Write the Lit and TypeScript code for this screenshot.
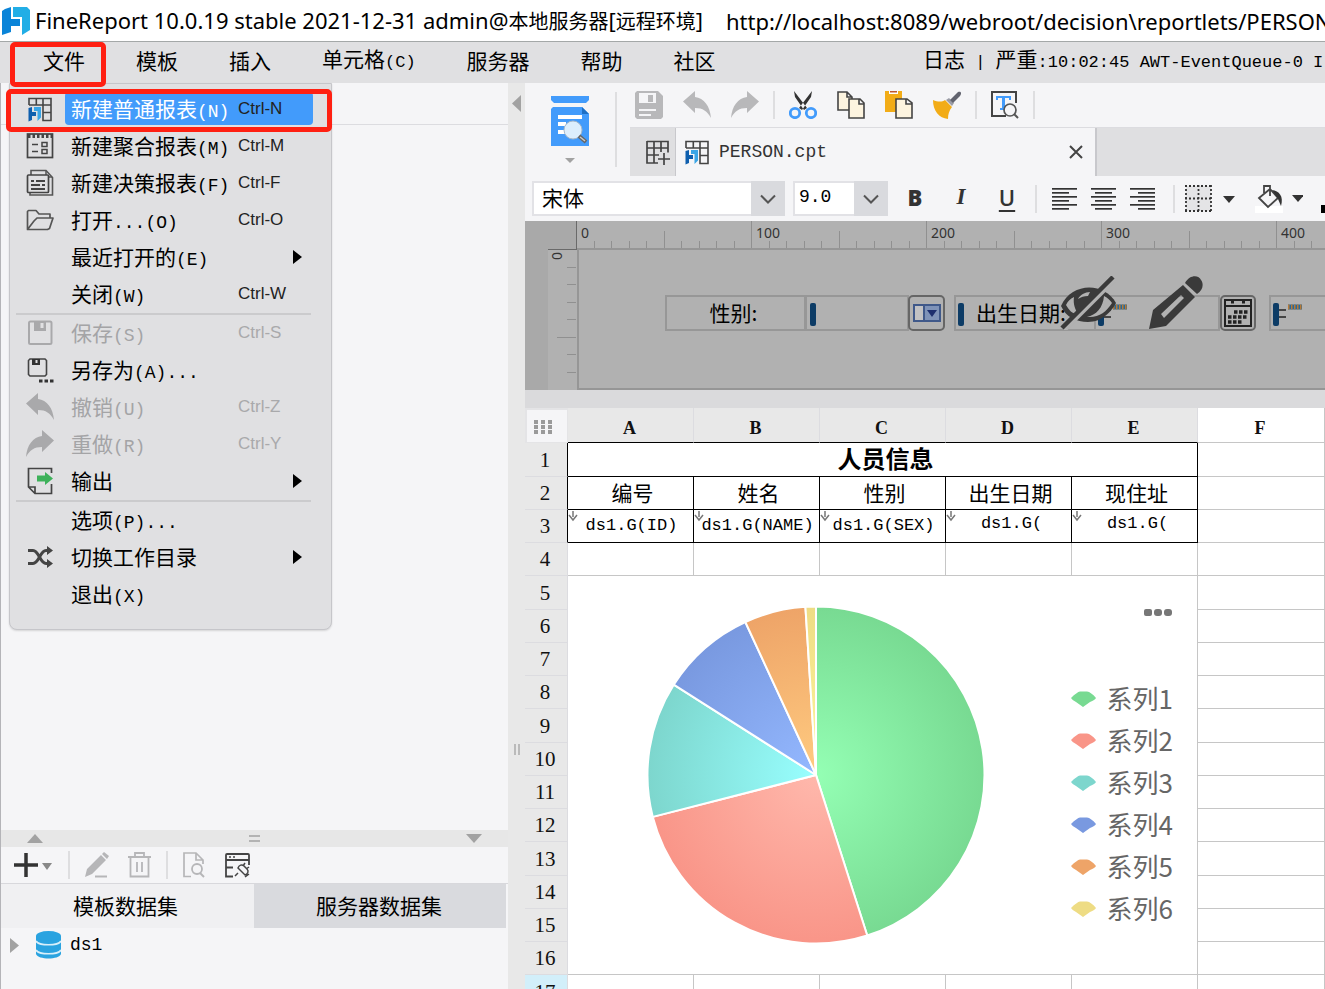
import { LitElement, html, svg, css, nothing, TemplateResult } from "lit";
import { customElement } from "lit/decorators.js";
import { classMap } from "lit/directives/class-map.js";

type Entry = {
  label: string;
  keys?: string;
  icon?: TemplateResult;
  disabled?: boolean;
  active?: boolean;
  sub?: boolean;
};

/** Wraps the Latin runs of a label so that they use the Latin face. */
const mixed = (text: string) =>
  html`<span class="mix">${text
    .split(/([\x20-\x7e]+)/)
    .filter(Boolean)
    .map((run) => (/^[\x20-\x7e]/.test(run) ? html`<span class="mono">${run}</span>` : run))}</span>`;

const box = (size: number, body: TemplateResult, view = 28) =>
  html`<svg width=${size} height=${size} viewBox="0 0 ${view} ${view}" fill="none" aria-hidden="true">${body}</svg>`;

const gridLogo = box(26, svg`
  <path d="M2 9V2.500h22V24.500h-8V9M2 9h22M9.300 2v7M16 2v7M16 16.500h8" stroke="#444" stroke-width="1.600"/>
  <path d="M1.500 12l3.500-1v5h4v4H5v4l-3.500 1.500z" fill="#0f5fae"/>
  <path d="M7 11h7v10.500L10.500 25v-10H7z" fill="#3aa5e6"/>`, 26);
const gridPlus = box(26, svg`
  <path d="M3 2.500h21v11M3 2v22h11M3 9h21M10 2v22M17 2v11M3 16h12" stroke="#444" stroke-width="1.700"/>
  <path d="M20 14v12M14 20h12" stroke="#444" stroke-width="1.700"/>`, 26);
const aggregate = box(28, svg`
  <rect x="1.500" y="2" width="25" height="23.500" stroke="#444" stroke-width="1.700"/>
  <path d="M2 4h24" stroke="#444" stroke-width="4" stroke-dasharray="2.500 2"/>
  <path d="M6 12.500h6M6 19.500h6" stroke="#444" stroke-width="1.500"/>
  <rect x="16" y="10.500" width="5" height="4" stroke="#444" stroke-width="1.500"/>
  <rect x="16" y="17.500" width="5" height="4" stroke="#444" stroke-width="1.500"/>`);
const decision = box(28, svg`
  <path d="M5 6V1.500h15l6.500 7V26H4v-3" stroke="#555" stroke-width="1.600"/>
  <path d="M20 2v6h6" stroke="#555" stroke-width="1.500"/>
  <rect x="1.500" y="6" width="21" height="17.500" rx="1" fill="#e0e0e2" stroke="#444" stroke-width="1.700"/>
  <path d="M5 12h3M10 12h9M5 16h9M5 20h14M16 16h3" stroke="#444" stroke-width="2"/>`);
const folder = box(28, svg`
  <path d="M1.500 23.500V5.500l1-1H10l3 3.500h11v4M1.500 23.500L8 15l3-3h16l-3.500 10.500-2 1z" stroke="#555" stroke-width="1.700" stroke-linejoin="round"/>`);
const saveGray = box(28, svg`
  <rect x="3" y="2.500" width="22.500" height="22.500" rx="1.500" stroke="#a9a9ab" stroke-width="2"/>
  <path d="M8 3h12v9H8z" fill="#a9a9ab"/><path d="M14.500 4h3v5h-3z" fill="#e0e0e2"/>`);
const saveAs = box(28, svg`
  <path d="M11 20H4l-1.500-1.500v-14L4 3h15l1.500 1.500v14L19 20h-9" stroke="#444" stroke-width="1.600"/>
  <path d="M6 3h8v6H6z" fill="#333"/><path d="M9.500 4h2v3h-2z" fill="#e0e0e2"/>
  <path d="M13 25h3.500M18.500 25H22M24 25h3.500" stroke="#333" stroke-width="3"/>`);
const undo = (c: string) => box(28, svg`
  <path d="M0 10.500L12 0v6c9 1 15 9 16 21-4-7-8-10-16-10v5z" fill=${c}/>`);
const redo = (c: string) => box(28, svg`
  <path d="M28 10.500L16 0v6C7 7 1 15 0 27c4-7 8-10 16-10v5z" fill=${c}/>`);
const exportIcon = box(28, svg`
  <path d="M25.500 6V1.500h-23V20l6.500 6.500h16.500V17M3 20h6v6" stroke="#444" stroke-width="1.700"/>
  <path d="M11 8.500h8V5l8 6.500-8 6.500v-3.500h-8z" fill="#3db15a"/>`);
const shuffle = box(28, svg`
  <path d="M2 7.500h5c6 0 7 13 13 13h3M2 20.500h5c6 0 7-13 13-13h3" stroke="#444" stroke-width="3"/>
  <path d="M21 3l6 4.500-6 4.500zM21 16l6 4.500-6 4.500z" fill="#444"/>`);

const MENU: Entry[][] = [
  [
    { label: "新建普通报表(N)", keys: "Ctrl-N", icon: gridLogo, active: true },
    { label: "新建聚合报表(M)", keys: "Ctrl-M", icon: aggregate },
    { label: "新建决策报表(F)", keys: "Ctrl-F", icon: decision },
    { label: "打开...(O)", keys: "Ctrl-O", icon: folder },
    { label: "最近打开的(E)", sub: true },
    { label: "关闭(W)", keys: "Ctrl-W" },
  ],
  [
    { label: "保存(S)", keys: "Ctrl-S", icon: saveGray, disabled: true },
    { label: "另存为(A)...", icon: saveAs },
    { label: "撤销(U)", keys: "Ctrl-Z", icon: undo("#a9a9ab"), disabled: true },
    { label: "重做(R)", keys: "Ctrl-Y", icon: redo("#a9a9ab"), disabled: true },
    { label: "输出", icon: exportIcon, sub: true },
  ],
  [{ label: "选项(P)..." }, { label: "切换工作目录", icon: shuffle, sub: true }, { label: "退出(X)" }],
];

const SERIES = [
  { name: "系列1", to: 162.3, inner: "#94ffb4", outer: "#78da92" },
  { name: "系列2", to: 255.6, inner: "#ffb8ac", outer: "#f99588" },
  { name: "系列3", to: 302.4, inner: "#98ffff", outer: "#7dd6cd" },
  { name: "系列4", to: 335.2, inner: "#94b8ff", outer: "#7999e0" },
  { name: "系列5", to: 356.4, inner: "#ffcb80", outer: "#eea468" },
  { name: "系列6", to: 360, inner: "#fff69c", outer: "#eedc84" },
];

@customElement("fr-menu")
export class FrMenu extends LitElement {
  static styles = css`
    :host { display: block; }
    .menu {
      box-sizing: border-box; width: 323px; padding: 6px 0 17px;
      background: #e0e0e2; border: 1px solid #c6c6ca; border-radius: 0 0 8px 8px;
      box-shadow: 0 1px 2px #0002;
    }
    .item {
      display: grid; grid-template-columns: 28px 168px 1fr 36px; align-items: center;
      width: 100%; height: 37px; padding: 0 0 0 16px; border: 0; background: none; text-align: left;
      font: 21px/32px "Noto Sans CJK SC", sans-serif; color: #000; white-space: nowrap;
    }
    .item:disabled { color: #a4a4a6; }
    .mono { font: 18px/28px "Liberation Mono", monospace; }
    .icon { display: flex; justify-content: center; }
    .body {
      grid-column: 2 / 4; display: grid; grid-template-columns: 167px 1fr; height: 33px; box-sizing: border-box;
      margin: 0 -18px 0 11px; padding: 0 0 3px 6px; border-radius: 4px; align-items: center;
    }
    .active .body { background: #429bfb; }
    .active .label { color: #fff; }
    .keys { font: 17px/32px "Liberation Sans", sans-serif; color: #222; }
    .item:disabled .keys { color: #a9a9ab; }
    .arrow { width: 9px; height: 16px; justify-self: end; margin-right: 29px; grid-column: 4; }
    .sep { height: 2px; border: 0; margin: 1px 20px -1px 6px; background: #cbcbcd; }
  `;
  render() {
    return html`<div class="menu" role="menu">
      ${MENU.map((group, i) => html`
        ${i ? html`<hr class="sep" />` : nothing}
        ${group.map((e) => html`<button role="menuitem" class=${classMap({ item: true, active: !!e.active })} ?disabled=${e.disabled}>
          <span class="icon">${e.icon ?? nothing}</span>
          <span class="body"><span class="label">${mixed(e.label)}</span><span class="keys">${e.keys ?? ""}</span></span>
          ${e.sub ? html`<svg class="arrow" viewBox="0 0 9 16"><path d="M0 1v14l9-7z" fill="#000"/></svg>` : nothing}
        </button>`)}`)}
    </div>`;
  }
}

@customElement("fr-chart")
export class FrChart extends LitElement {
  static styles = css`
    :host { display: flex; height: 100%; justify-content: space-between; padding: 0 24px 0 78px; box-sizing: border-box; }
    .pie { align-self: center; }
    .side { display: flex; flex-direction: column; align-items: flex-end; padding-top: 32px; }
    .more { border: 0; background: none; padding: 0; height: 10px; display: flex; }
    .legend { list-style: none; margin: 60px 0 0; padding: 0; }
    .entry { display: flex; align-items: center; gap: 11px; height: 42px; font: 26px/42px "Noto Sans CJK SC", sans-serif; color: #666; }
    .name { padding-bottom: 3px; }
  `;
  render() {
    const at = (deg: number) => {
      const a = (deg * Math.PI) / 180;
      return `${(170 + 168.5 * Math.sin(a)).toFixed(2)} ${(170 - 168.5 * Math.cos(a)).toFixed(2)}`;
    };
    return html`
      <svg class="pie" width="340" height="340" viewBox="0 0 340 340" role="img" aria-label="饼图">
        ${SERIES.map((s, i) => {
          const from = i ? SERIES[i - 1].to : 0;
          return svg`<radialGradient id="g${i}" gradientUnits="userSpaceOnUse" cx="170" cy="170" r="168.5">
              <stop offset="0" stop-color=${s.inner}/><stop offset="1" stop-color=${s.outer}/></radialGradient>
            <path d="M170 170L${at(from)}A168.5 168.5 0 0 1 ${at(s.to)}z" fill="url(#g${i})" stroke="#fff" stroke-width="2" stroke-linejoin="bevel"/>`;
        })}
      </svg>
      <div class="side">
        <button class="more" aria-label="更多"><svg width="30" height="10"><rect x="1" y="1" width="8" height="7" rx="2" fill="#777"/><rect x="11" y="1" width="8" height="7" rx="3" fill="#777"/><rect x="21" y="1" width="8" height="7" rx="3" fill="#777"/></svg></button>
        <ul class="legend">
          ${SERIES.map((s) => html`<li class="entry">
            <svg width="25" height="16" viewBox="0 0 25 16"><path d="M0 7Q6 1 9 .500h7Q20 1 25 7q-1 2-6 4l-7 5-7-5Q1 9 0 7z" fill=${s.outer}/></svg>
            <span class="name">${s.name}</span></li>`)}
        </ul>
      </div>`;
  }
}

@customElement("fr-sheet")
export class FrSheet extends LitElement {
  static styles = css`
    :host { display: block; }
    .sheet { width: 100%; table-layout: fixed; border-collapse: separate; border-spacing: 0; background: #fff; }
    .rows { width: 43px; }
    .col { width: 126px; }
    th, td { padding: 0; box-sizing: border-box; border: 0 solid #c6c6c6; border-width: 0 1px 1px 0; text-align: center; overflow: hidden; white-space: nowrap; }
    .head { height: 35px; }
    .row { height: 33px; }
    .row:nth-child(4n + 1) { height: 34px; }
    .letter, .num { font: 21px/28px "Liberation Serif", serif; color: #111; background: #e8e8e8; border-color: #dcdce0; }
    .num { padding-right: 2px; }
    .letter { font-weight: bold; font-size: 18px; border-bottom-color: #000; padding: 5px 2px 0 0; }
    .plain { background: #fff; border-color: #c6c6c6; }
    .corner { background: #f5f5f7; border: 2px solid #e4e4e6; border-width: 2px 1px 1px 2px; padding: 4px 9px 0 0; }
    .dots { display: block; margin: auto; }
    .hot { background: #d2effa; }
    .edge { border-right-color: #000; }
    .boxed, .title { font: 21px/28px "Noto Sans CJK SC", sans-serif; border-color: #000; padding: 0 0 3px 4px; }
    .title { font-weight: bold; font-size: 24px; padding-left: 6px; }
    .field { position: relative; padding: 0 0 0 2px; }
    .short { padding: 0 0 4px 6px; }
    .formula { display: block; font: 17px/28px "Liberation Mono", monospace; }
    .down { position: absolute; left: 0; top: 0; }
    .chart { vertical-align: top; height: 399px; }
  `;
  render() {
    const num = (n: number) => html`<th scope="row" class=${classMap({ num: true, edge: n < 4, hot: n === 17 })}>${n}</th>`;
    const blanks = (n: number) => Array.from({ length: n }, () => html`<td></td>`);
    return html`<table class="sheet">
      <colgroup><col class="rows" />${"ABCDE".split("").map(() => html`<col class="col" />`)}<col /></colgroup>
      <thead><tr class="head">
        <th class="corner"><svg class="dots" width="20" height="16">${[1, 8, 15].map((x) => [0, 5, 10].map((y) => svg`<rect x=${x} y=${y} width="4" height="4" fill="#9a9a9a"/>`))}</svg></th>
        ${"ABCDEF".split("").map((l) => html`<th scope="col" class=${classMap({ letter: true, plain: l === "F" })}>${l}</th>`)}
      </tr></thead>
      <tbody>
        <tr class="row">${num(1)}<td class="title" colspan="5">人员信息</td><td></td></tr>
        <tr class="row">${num(2)}${["编号", "姓名", "性别", "出生日期", "现住址"].map((t) => html`<td class="boxed">${t}</td>`)}<td></td></tr>
        <tr class="row">${num(3)}${["ds1.G(ID)", "ds1.G(NAME)", "ds1.G(SEX)", "ds1.G(", "ds1.G("].map((t) => html`<td class=${classMap({ boxed: true, field: true, short: t.endsWith("(") })}>
          <svg class="down" width="12" height="13"><path d="M5 1v6M1 5l4 5 4-5" stroke="#777" stroke-width="1.500" fill="none"/></svg><span class="formula">${t}</span></td>`)}<td></td></tr>
        <tr class="row">${num(4)}${blanks(6)}</tr>
        <tr class="row">${num(5)}<td class="chart" colspan="5" rowspan="12"><fr-chart></fr-chart></td><td></td></tr>
        ${Array.from({ length: 11 }, (_, i) => html`<tr class="row">${num(i + 6)}<td></td></tr>`)}
        <tr class="row">${num(17)}${blanks(6)}</tr>
      </tbody>
    </table>`;
  }
}

@customElement("fr-params")
export class FrParams extends LitElement {
  static styles = css`
    :host { display: block; }
    .pane { display: grid; grid-template-columns: 23px 29px 1fr; grid-template-rows: 29px 140px; background: #b1b1b1; overflow: hidden; }
    .strip { background: #a9a9a9; grid-row: 1 / 3; }
    .joint { background: #a9a9a9; border: solid #6a6a6a; border-width: 0 1px 1px 0; }
    .across { overflow: hidden; border-bottom: 2px solid #969696; }
    .tick { font: 14px "Noto Sans", sans-serif; fill: #333; }
    .canvas { position: relative; overflow: hidden; border: 2px solid #969696; border-width: 0 0 2px 2px; }
    .widget { position: absolute; top: 45px; height: 36px; box-sizing: border-box; border: 2px solid #979797; background: none; font: 21px/30px "Noto Sans CJK SC", sans-serif; color: #000; padding: 0; }
    .gender { left: 86px; width: 141px; text-align: center; padding-right: 4px; }
    .gender-input { left: 226px; width: 104px; }
    .drop { left: 329px; width: 37px; border: 2px solid #666; border-radius: 5px; }
    .birth { left: 375px; width: 142px; padding-left: 20px; }
    .birth-input { left: 515px; width: 126px; }
    .calendar { left: 641px; width: 36px; border: 2px solid #666; border-radius: 5px; }
    .last { left: 690px; width: 142px; }
    .glyph { display: block; margin: auto; }
    .mark { position: absolute; top: 51px; }
    .m1 { left: 231px; } .m2 { left: 379px; } .m3 { left: 519px; } .m4 { left: 694px; }
    .eye { position: absolute; left: 481px; top: 26px; }
    .pencil { position: absolute; left: 570px; top: 26px; }
  `;
  render() {
    const bar = html`<svg width="6" height="23"><rect x="0" y="0" width="6" height="23" rx="2" fill="#0d3c66"/></svg>`;
    const bound = html`<svg width="30" height="23"><rect width="6" height="23" rx="2" fill="#0d3c66"/>
      <path d="M6 7h7M6 14h7" stroke="#222" stroke-width="1.500"/><path d="M15 4h14" stroke="#27689a" stroke-width="5"/><path d="M15 4h14" stroke="#b87a35" stroke-width="5" stroke-dasharray="1.500 1.500"/></svg>`;
    return html`<div class="pane">
      <div class="strip"></div><div class="joint"></div>
      <div class="across"><svg width="2000" height="29">
        ${Array.from({ length: 110 }, (_, k) => {
          const x = Math.round(k * 17.5) - 0.5;
          return svg`<path d="M${x} ${k % 10 === 0 ? 0 : k % 5 === 0 ? 10 : 20}V29" stroke="#909090"/>`;
        })}
        ${Array.from({ length: 5 }, (_, k) => svg`<text class="tick" x=${k * 175 + 4} y="17">${k * 100}</text>`)}
      </svg></div>
      <svg width="29" height="140">
        ${[1, 2, 3, 4, 5, 6, 7].map((k) => svg`<path d="M${k === 5 ? 9 : 19} ${Math.round(k * 17.5) - 0.5}H28" stroke="#909090"/>`)}
        <text class="tick" transform="translate(14 10) rotate(-90)">0</text>
      </svg>
      <div class="canvas">
        <label class="widget gender" for="gender">性别:</label>
        <input class="widget gender-input" id="gender" />
        <button class="widget drop" aria-label="下拉框"><svg class="glyph" width="28" height="18"><rect x="1" y="1" width="26" height="16" fill="#c2c2c4" stroke="#40598a" stroke-width="2"/><path d="M11 1h16v16H11z" fill="#7f93b8" stroke="#40598a" stroke-width="2"/><path d="M14 6h10l-5 7z" fill="#1d2f6e"/></svg></button>
        <label class="widget birth" for="birth">出生日期:</label>
        <input class="widget birth-input" id="birth" />
        <button class="widget calendar" aria-label="日历"><svg class="glyph" width="28" height="28"><path d="M1 1h26v26H1zM1 7h26" stroke="#222" stroke-width="2" fill="none"/><path d="M7 3h3M18 3h3" stroke="#222" stroke-width="3"/><path d="M10 13h14M4 18h20M4 23h15" stroke="#222" stroke-width="3.500" stroke-dasharray="3.500 1.500"/></svg></button>
        <div class="widget last"></div>
        <span class="mark m1">${bar}</span><span class="mark m2">${bar}</span><span class="mark m3">${bound}</span><span class="mark m4">${bound}</span>
        <svg class="eye" width="56" height="54" viewBox="0 0 56 54"><path d="M1 30C12 6 44 6 56 27c-4 8-14 19-28 19C16 46 6 41 1 30z" fill="#3a3a3a"/>
          <path d="M6 29c2-4 4-6 8-8-1 7 1 12 4 17C12 38 9 34 6 29zM44 20c4 2 6 4 8 7-6 9-13 15-25 14 9-2 16-9 17-21z" fill="#b1b1b1"/><path d="M18 23c2-4 7-7 12-7l-2 4c-4 0-7 1-10 3z" fill="#b1b1b1"/>
          <path d="M4 54L55 3" stroke="#b1b1b1" stroke-width="5"/><path d="M2 52L53 1" stroke="#3a3a3a" stroke-width="4.500"/></svg>
        <svg class="pencil" width="54" height="54" viewBox="0 0 54 54"><path fill-rule="evenodd" d="M0 53l4-19 30-25 12 12-29 29zM12 38l3 4 20-20-3-3z" fill="#3a3a3a"/><path d="M36 7c5-9 14-8 16-3 3 4 2 10-4 14z" fill="#3a3a3a"/></svg>
      </div>
    </div>`;
  }
}

@customElement("app-root")
export class AppRoot extends LitElement {
  static styles = css`
    :host { display: flex; flex-direction: column; height: 100vh; overflow: hidden; position: relative; background: #f5f5f7; color: #000; font: 21px/32px "Noto Sans CJK SC", sans-serif; }
    button { border: 0; background: none; padding: 0; margin: 0; font: inherit; color: inherit; display: flex; align-items: center; justify-content: center; }
    svg { display: block; flex: none; }
    .mono { font: 18px/28px "Liberation Mono", monospace; }
    .titlebar { display: flex; align-items: center; gap: 5px; height: 41px; padding-left: 2px; background: #fff; white-space: pre; font: 20px/38px "Noto Sans CJK SC", sans-serif; flex: none; overflow: hidden; }
    .titlebar .mono, .url { font: 22px/38px "Noto Sans", sans-serif; }
    .url { margin-left: 18px; }
    .menubar { box-sizing: border-box; display: flex; align-items: center; gap: 51px; height: 42px; padding: 0 0 6px 43px; background: #e0e0e2; border-top: 1px solid #a4a8a8; flex: none; white-space: pre; }
    .menubar .mono { font-size: 17px; }
    .log { margin-left: auto; flex: 0 0 402px; overflow: hidden; }
    .main { flex: 1; display: grid; grid-template-columns: 508px 17px minmax(0, 1fr); min-height: 0; }
    .left { display: grid; grid-template-rows: 747px 17px 36px 45px 1fr; border-left: 1px solid #b4b4b8; }
    .upper-head { box-sizing: border-box; height: 42px; border-bottom: 1px solid #dcdce0; }
    .hsplit { display: flex; align-items: center; justify-content: space-between; padding: 0 26px; background: #e7e7e7; }
    .vsplit { display: flex; flex-direction: column; align-items: center; background: #e8e8e8; padding-top: 12px; }
    .grip { margin-top: 632px; }
    .tools { display: flex; align-items: center; padding-left: 12px; }
    .tools .bar { height: 28px; margin: 0 14px; }
    .bar { width: 2px; height: 28px; background: #dedee0; flex: none; }
    .tabs { box-sizing: border-box; display: grid; grid-template-columns: 253px 252px; border-top: 1px solid #d8d8dc; }
    .tab { background: #f0f0f2; padding: 0 4px 3px 0; }
    .tab.off { background: #d9dade; padding-right: 2px; }
    .tree { display: flex; align-items: center; height: 34px; padding-left: 9px; }
    .leaf { margin: 0 9px 0 17px; }
    .right { min-width: 0; display: flex; flex-direction: column; }
    .top { display: flex; height: 93px; }
    .preview { flex-direction: column; width: 90px; gap: 12px; justify-content: center; }
    .tall { height: 75px; margin: 9px 13px 0 0; }
    .stack { flex: 1; min-width: 0; display: grid; grid-template-rows: 44px 49px; }
    .icons { display: flex; align-items: center; gap: 14px; padding-left: 5px; }
    .group { display: flex; gap: 20px; }
    .files { display: flex; background: #dfdfe1; border-top: 1px solid #dcdce0; }
    .new { width: 46px; border-right: 1px solid #c8c8cc; padding-left: 8px; box-sizing: border-box; }
    .file { box-sizing: border-box; width: 421px; display: flex; align-items: center; padding: 0 12px 0 8px; gap: 9px; background: #f5f5f7; border-right: 2px solid #c8c8cc; color: #333; }
    .close { margin-left: auto; }
    .format { display: flex; align-items: center; height: 45px; padding-left: 7px; flex: none; overflow: hidden; }
    .format > * { flex: none; }
    .combo { display: flex; position: relative; height: 35px; margin-right: 8px; }
    .select { appearance: none; box-sizing: border-box; width: 100%; height: 35px; padding: 0 0 3px 8px; border: 2px solid #e2e2e6; border-radius: 0; background: #fff; color: #000; font: 21px/28px "Noto Sans CJK SC", sans-serif; }
    .family { width: 253px; }
    .size { width: 95px; margin-right: 14px; }
    .size .select { font: 18px/28px "Liberation Mono", monospace; padding: 0 0 3px 4px; }
    .chev { position: absolute; right: 0; top: 0; width: 34px; height: 35px; background: #d9dade; pointer-events: none; }
    .styles { display: flex; gap: 20px; margin-right: 15px; }
    .style { width: 26px; padding-bottom: 3px; color: #333; font: 800 22px/34px "Open Sans", sans-serif; }
    .italic { font: italic bold 23px/34px "Liberation Serif", serif; }
    .under { text-decoration: underline; text-decoration-thickness: 2px; text-underline-offset: 4px; font-weight: 600; }
    .aligns { display: flex; gap: 14px; margin: 0 18px 0 15px; }
    .more { margin: 0 20px 0 10px; }
    .gap { height: 18px; background: #dadadc; flex: none; }
    .popup { position: absolute; left: 9px; top: 83px; }
    .ring { position: absolute; box-sizing: border-box; border: 5px solid #ff2012; border-radius: 5px; pointer-events: none; }
    .ring-file { left: 10px; top: 42px; width: 96px; height: 45px; }
    .ring-new { left: 6px; top: 89px; width: 326px; height: 43px; }
  `;

  private tri(w: number, h: number, d: string, c = "#a2a2a2") {
    return html`<svg width=${w} height=${h} viewBox="0 0 ${w} ${h}" aria-hidden="true"><path d=${d} fill=${c}/></svg>`;
  }

  private align(kind: number) {
    const rows = [0, 1, 2, 3, 4, 5];
    return html`<svg width="25" height="22" aria-hidden="true">${rows.map((r) => {
      const w = r % 2 ? 17 : 25;
      const x = ((25 - w) * kind) / 2;
      return svg`<rect x=${x} y=${r * 4} width=${w} height="1.700" fill="#333"/>`;
    })}</svg>`;
  }

  private chevron() {
    return html`<svg class="chev" viewBox="0 0 34 35"><path d="M10 14.500l7 7 7-7" fill="none" stroke="#555" stroke-width="2"/></svg>`;
  }

  private renderLeft() {
    return html`<section class="left">
      <div class="upper"><div class="upper-head"></div></div>
      <div class="hsplit">
        ${this.tri(16, 9, "M0 9L8 0l8 9z")}
        <svg width="11" height="7"><path d="M0 1h11M0 6h11" stroke="#a2a2a2" stroke-width="1.500"/></svg>
        ${this.tri(16, 9, "M0 0h16L8 9z")}
      </div>
      <div class="tools">
        <button aria-label="新增"><svg width="41" height="26"><path d="M1 13h24M13 1v24" stroke="#333" stroke-width="3.500"/><path d="M29 11h10l-5 7z" fill="#888"/></svg></button>
        <span class="bar"></span>
        <button aria-label="编辑"><svg width="26" height="26"><path d="M1 25l2-8L17 3l5 5L8 22zM18 2l2-2 5 4-2 3z" fill="#b6b6b8"/><path d="M11 24.500h12" stroke="#b6b6b8" stroke-width="2"/></svg></button>
        <button aria-label="删除"><svg width="42" height="26"><path d="M18 5h23M25 5V1h9v4M20.500 6v18.500h18V6M27 10v10M32 10v10" stroke="#b6b6b8" stroke-width="1.800" fill="none"/></svg></button>
        <span class="bar"></span>
        <button aria-label="预览"><svg width="24" height="26"><path d="M9 24.500H2V1h12l7 7v4M14 1v7h7" stroke="#b6b6b8" stroke-width="1.700" fill="none"/><circle cx="15" cy="17" r="5" stroke="#b6b6b8" stroke-width="1.800" fill="none"/><path d="M18 21l4 4" stroke="#b6b6b8" stroke-width="2"/></svg></button>
        <button aria-label="连接"><svg width="44" height="26"><path d="M27 24.500h-7V3q0-1 1-1h21q1 0 1 1V13M20 8h23M20 15.500h7" stroke="#444" stroke-width="1.800" fill="none"/><path d="M23 5h2M27 5h2" stroke="#444" stroke-width="1.500"/><path d="M29 24l3-3M32 16l7 7c3-1 4-4 2-6l-3-3c-2-2-5-1-6 2zM37 14l2-3M40 17l3-2M39 25l4-3" stroke="#444" stroke-width="1.500" fill="none"/></svg></button>
      </div>
      <div class="tabs" role="tablist"><button class="tab" role="tab">模板数据集</button><button class="tab off" role="tab">服务器数据集</button></div>
      <div class="tree">${this.tri(9, 15, "M0 0v15l9-7.500z")}
        <svg class="leaf" width="25" height="28"><path d="M0 5v18c2 6 23 6 25 0V5z" fill="#2aa3e0"/><ellipse cx="12.500" cy="5" rx="12.500" ry="5" fill="#2aa3e0"/><path d="M0 10c3 5 22 5 25 0M0 19c3 5 22 5 25 0" stroke="#d8effa" stroke-width="1.700" fill="none"/></svg>
        <span class="mono">ds1</span></div>
    </section>`;
  }

  private renderTools() {
    return html`<div class="icons">
      <div class="group">
        <button aria-label="保存">${box(28, svg`<path d="M2 0h21l5 5v21l-2 2H2l-2-2V2z" fill="#b8b8ba"/><path d="M4 2h17v10H4zM4 18h17v2H4zM4 23h12v2H4z" fill="#f5f5f7"/><path d="M13 4h5v7h-5z" fill="#b8b8ba"/>`)}</button>
        <button aria-label="撤销">${undo("#b8b8ba")}</button>
        <button aria-label="重做">${redo("#b8b8ba")}</button>
      </div>
      <span class="bar"></span>
      <div class="group">
        <button aria-label="剪切">${box(28, svg`<path d="M5 0l13 17-3 2L6 6zM23 0L10 17l3 2 9-13z" fill="#333"/><circle cx="6" cy="22" r="4.700" stroke="#429bfb" stroke-width="2.800"/><circle cx="22" cy="22" r="4.700" stroke="#429bfb" stroke-width="2.800"/>`)}</button>
        <button aria-label="复制">${box(28, svg`<path d="M1 1h9l5 5v13H1zM10 1v5h5" fill="#fdf4df" stroke="#444" stroke-width="1.600"/><path d="M12 8h11l4 4v15H12zM22 8v5h5" fill="#fdf4df" stroke="#444" stroke-width="1.600"/>`)}</button>
        <button aria-label="粘贴">${box(28, svg`<path d="M0 0h17v21H0z" fill="#f2ac17"/><path d="M4 0h9v3H4z" fill="#fff"/><path d="M5 0h7v1.500H5z" fill="#c0562c"/><path d="M11 8h11l5 4v15H11zM21 8v5h6" fill="#fdf4df" stroke="#444" stroke-width="1.600"/>`)}</button>
        <button aria-label="格式刷">${box(28, svg`<path d="M0 9c5 2 9 2 12 0l7 7c-3 4-4 7-4 12C6 27 0 20 0 9z" fill="#f2ac17"/><path d="M13 9l6 6 2-3-5-5z" fill="#9a9ca6"/><path d="M17 9l8-8c3-1 4 1 2 4l-7 7z" fill="#62646f"/>`)}</button>
      </div>
      <span class="bar"></span>
      <button aria-label="查找">${box(28, svg`<path d="M25 12V1H1v24h14" stroke="#444" stroke-width="2"/><path d="M5 5h15v4h-2V7h-4v10h2v2H9v-2h2V7H7v2H5z" fill="#429bfb"/><circle cx="19" cy="19" r="6" fill="#f5f5f7" stroke="#555" stroke-width="1.700"/><path d="M23 23l4 4" stroke="#555" stroke-width="2"/>`)}</button>
      <span class="bar"></span>
    </div>`;
  }

  private renderRight() {
    return html`<section class="right">
      <div class="top">
        <button class="preview" aria-label="预览">
          <svg width="38" height="50"><path d="M0 0h38v4l-3 3H3L0 4z" fill="#429bfb"/><path d="M2 11h29l7 7v32H0V13z" fill="#429bfb"/><path d="M31 11l7 7h-7z" fill="#1d6fc4"/><path d="M7 19h24v4H7zM7 26h8v4H7zM7 34h8v4H7z" fill="#fff"/><circle cx="22" cy="34" r="9" fill="#dceefd" stroke="#a8b8c8"/><path d="M28 40l7 6" stroke="#666" stroke-width="4"/><path d="M29 41l5 4" stroke="#ccc" stroke-width="1.500"/></svg>
          ${this.tri(10, 5, "M0 0h10L5 5z")}
        </button>
        <span class="bar tall"></span>
        <div class="stack">${this.renderTools()}
          <div class="files">
            <button class="new" aria-label="新建">${gridPlus}</button>
            <div class="file">${gridLogo}<span class="mono">PERSON.cpt</span>
              <button class="close" aria-label="关闭"><svg width="14" height="14"><path d="M1 1l12 12M13 1L1 13" stroke="#444" stroke-width="2"/></svg></button></div>
          </div>
        </div>
      </div>
      <div class="format">
        <div class="combo family"><select class="select" aria-label="字体"><option>宋体</option></select>${this.chevron()}</div>
        <div class="combo size"><select class="select" aria-label="字号"><option>9.0</option></select>${this.chevron()}</div>
        <div class="styles"><button class="style">B</button><button class="style italic">I</button><button class="style under">U</button></div>
        <span class="bar"></span>
        <div class="aligns">
          <button aria-label="左对齐">${this.align(0)}</button><button aria-label="居中">${this.align(1)}</button><button aria-label="右对齐">${this.align(2)}</button>
        </div>
        <span class="bar"></span>
        <button class="more" aria-label="边框"><svg width="50" height="28"><rect x="1" y="1" width="25" height="25" fill="#e4e4e6"/><path d="M0 1h27M0 13.500h27M0 26h27M1 0v27M13.500 0v27M26 0v27" stroke="#333" stroke-width="1.800" stroke-dasharray="2 2"/><path d="M38 11h12l-6 7z" fill="#333"/></svg></button>
        <button class="fill" aria-label="填充"><svg width="48" height="28"><path d="M0 21h28v7H0z" fill="#fff"/><path d="M4 13L15 4l8 9-10 9zM9 8V1h6v10" fill="none" stroke="#444" stroke-width="1.800"/><path d="M17 5c7 1 12 6 9 16l-3-7z" fill="#333"/><path d="M37 10h12l-6 7z" fill="#333"/></svg></button>
        <svg width="32" height="28"><path d="M18 20h12v8H18z" fill="#000"/></svg>
      </div>
      <fr-params></fr-params>
      <div class="gap"></div>
      <fr-sheet></fr-sheet>
    </section>`;
  }

  render() {
    return html`
      <header class="titlebar">
        <svg width="28" height="28"><path d="M0 4l3-2 6-2v12h9v7H9v6l-9 3z" fill="#0a84d8"/><path d="M11 0h14l3 3v20l-8 5V10h-9z" fill="#22aee6"/></svg>
        ${mixed("FineReport 10.0.19 stable 2021-12-31 admin@本地服务器[远程环境]")}
        <span class="url">http://localhost:8089/webroot/decision\\reportlets/PERSON</span>
      </header>
      <nav class="menubar">
        ${["文件", "模板", "插入", "单元格(C)", "服务器", "帮助", "社区"].map((t) => html`<button>${mixed(t)}</button>`)}
        <span class="log">${mixed("日志 | 严重:10:02:45 AWT-EventQueue-0 I")}</span>
      </nav>
      <main class="main">
        ${this.renderLeft()}
        <div class="vsplit">${this.tri(9, 17, "M9 0v17L0 8.500z")}
          <svg class="grip" width="6" height="11"><path d="M1 0v11M5 0v11" stroke="#aaa" stroke-width="1.500"/></svg></div>
        ${this.renderRight()}
      </main>
      <fr-menu class="popup"></fr-menu>
      <div class="ring ring-file"></div>
      <div class="ring ring-new"></div>`;
  }
}
